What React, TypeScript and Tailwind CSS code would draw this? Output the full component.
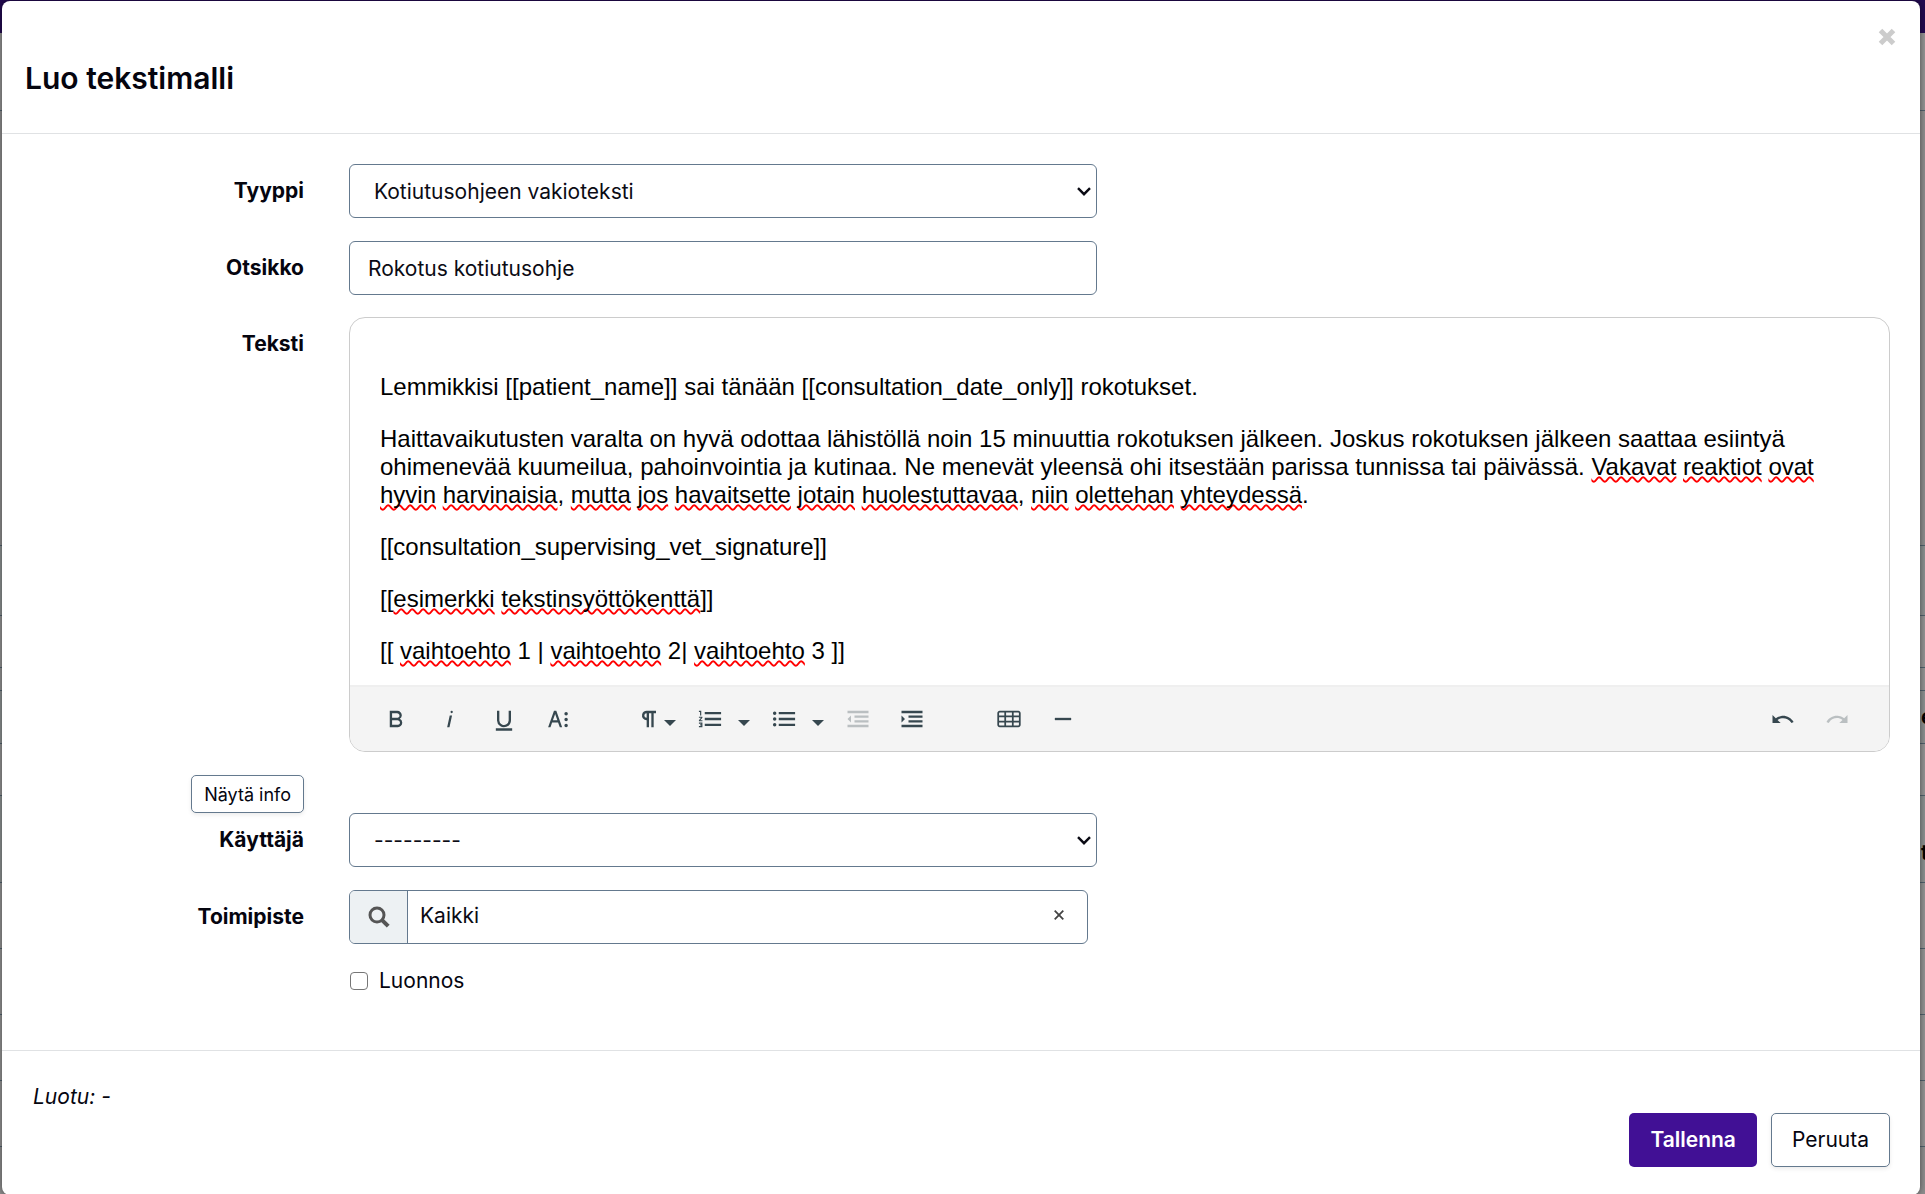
import { useState, type ReactNode } from "react";
import { clsx } from "clsx";

const CONTROL = "h-[54px] rounded-md border border-[#64798e] bg-white text-[21px] text-[#0b0b14] outline-none";

const ICONS = {
  bold: "M15.25,11.8h0A3.68,3.68,0,0,0,17,9a3.93,3.93,0,0,0-3.86-4H6.65V19h7a3.74,3.74,0,0,0,3.7-3.78V15.1A3.64,3.64,0,0,0,15.25,11.8ZM8.65,7h4.2a2.09,2.09,0,0,1,2,1.3,2.09,2.09,0,0,1-1.37,2.61,2.23,2.23,0,0,1-.63.09H8.65Zm4.6,10H8.65V13h4.6a2.09,2.09,0,0,1,2,1.3,2.09,2.09,0,0,1-1.37,2.61A2.23,2.23,0,0,1,13.25,17Z",
  italic: "M11.76,9h2l-2.2,10h-2Zm1.68-4a1,1,0,1,0,1,1,1,1,0,0,0-1-1Z",
  underline: "M19,20v2H5V20Zm-3-6.785a4,4,0,0,1-5.74,3.4A3.75,3.75,0,0,1,8,13.085V5.005H6v8.21a6,6,0,0,0,8,5.44,5.851,5.851,0,0,0,4-5.65v-8H16Z",
  moreText: "M13.55,19h2l-5-14h-2l-5,14h2l1.4-4h5.1Zm-5.9-6,1.9-5.2,1.9,5.2Zm12.8,4.5a1.5,1.5,0,1,1-1.5-1.5A1.5,1.5,0,0,1,20.45,17.5Zm0-5a1.5,1.5,0,1,1-1.5-1.5A1.5,1.5,0,0,1,20.45,12.5Zm0-5A1.5,1.5,0,1,1,18.95,6,1.5,1.5,0,0,1,20.45,7.5Z",
  paragraph: "M10.15,5A4.11,4.11,0,0,0,6.08,8.18,4,4,0,0,0,10,13v6h2V7h2V19h2V7h2V5ZM8,9a2,2,0,0,1,2-2v4A2,2,0,0,1,8,9Z",
  ordered: "M2.5,16h2v.5h-1v1h1V18h-2v1h3V15h-3Zm1-7h1V5h-2V6h1Zm-1,2H4.3L2.5,13.1V14h3V13H3.7l1.8-2.1V10h-3Zm5-5V8h14V6Zm0,12h14V16H7.5Zm0-5h14V11H7.5Z",
  unordered: "M4,10.5a1.5,1.5,0,1,0,0,3,1.5,1.5,0,0,0,0-3ZM4,5.5a1.5,1.5,0,1,0,0,3,1.5,1.5,0,0,0,0-3ZM4,15.5a1.5,1.5,0,1,0,0,3,1.5,1.5,0,0,0,0-3ZM7.5,6V8h14V6Zm0,12h14V16H7.5Zm0-5h14V11H7.5Z",
  outdent: "M3,12l3,3V9L3,12zM3,19h18v-2H3V19zM3,7h18V5H3V7zM9,11h12V9H9V11zM9,15h12v-2H9V15z",
  indent: "M3,9v6l3-3L3,9zM3,19h18v-2H3V19zM3,7h18V5H3V7zM9,11h12V9H9V11zM9,15h12v-2H9V15z",
  table: "M20,5H4C2.9,5,2,5.9,2,7v10c0,1.1,0.9,2,2,2h16c1.1,0,2-0.9,2-2V7C22,5.9,21.1,5,20,5zM9.5,13.5v-3h5v3H9.5zM14.5,15v2.5h-5V15H14.5zM9.5,9V6.5h5V9H9.5zM3.5,7c0-0.3,0.2-0.5,0.5-0.5h4V9H3.5V7zM3.5,10.5H8v3H3.5V10.5zM3.5,17v-2H8v2.5H4C3.7,17.5,3.5,17.3,3.5,17zM20.5,17c0,0.3-0.2,0.5-0.5,0.5h-4V15h4.5V17zM20.5,13.5H16v-3h4.5V13.5zM16,9V6.5h4c0.3,0,0.5,0.2,0.5,0.5v2H16z",
  line: "M5,11h14v2H5Z",
  undo: "M10.4,9.4c-1.7,0.3-3.2,0.9-4.6,2L3,8.5v7h7l-2.7-2.7c3.7-2.6,8.8-1.8,11.5,1.9c0.2,0.3,0.4,0.5,0.5,0.8l1.8-0.9C18.9,10.9,14.7,8.7,10.4,9.4z",
  redo: "M13.6,9.4c1.7,.3,3.2,.9,4.6,2L21,8.5v7h-7l2.7-2.7C13,10.1,7.9,11,5.3,14.7c-.2.3-.4.5-.5.8L3,14.6C5.1,10.8,9.3,8.7,13.6,9.4z",
};

function Tool({ icon, label, disabled }: { icon: keyof typeof ICONS; label: string; disabled?: boolean }) {
  return (
    <button
      type="button"
      aria-label={label}
      disabled={disabled}
      className={clsx("flex h-12 w-[54px] items-center justify-center text-[#36474f]", disabled && "opacity-30")}
    >
      <svg viewBox="0 0 24 24" className="size-7" fill="currentColor">
        <path d={ICONS[icon]} />
      </svg>
    </button>
  );
}

function Caret({ label }: { label: string }) {
  return (
    <button type="button" aria-label={label} className="flex h-12 w-5 items-center justify-center pt-2 text-[#36474f]">
      <svg viewBox="0 0 12 6" className="h-[6px] w-3" fill="currentColor">
        <path d="M0 0h12L6 6z" />
      </svg>
    </button>
  );
}

// Word flagged by the spell checker
function Sp({ children }: { children: ReactNode }) {
  return (
    <span className="underline decoration-[#ff0000] decoration-wavy decoration-2 underline-offset-1 [text-decoration-skip-ink:none]">
      {children}
    </span>
  );
}

function Select({ id, options }: { id: string; options: string[] }) {
  return (
    <div className="relative w-[748px] max-w-full">
      <select id={id} className={clsx(CONTROL, "w-full appearance-none pt-px pr-10 pl-6")}>
        {options.map((o) => (
          <option key={o}>{o}</option>
        ))}
      </select>
      <svg
        viewBox="0 0 14 9"
        className="pointer-events-none absolute right-[6px] top-[23px] h-[9px] w-[14px]"
        fill="none"
        stroke="#0b0b14"
        strokeWidth="2.4"
      >
        <path d="M1 1.2l6 6 6-6" />
      </svg>
    </div>
  );
}

function Label({ htmlFor, id, children }: { htmlFor?: string; id?: string; children: ReactNode }) {
  const cls = "block pt-[14px] text-right text-[21px] leading-[26px] font-bold";
  if (!htmlFor) {
    return (
      <span id={id} className={cls}>
        {children}
      </span>
    );
  }
  return (
    <label htmlFor={htmlFor} className={cls}>
      {children}
    </label>
  );
}

// Dimmed page that shows around the dialog
const ROWS = [
  { cls: "h-[78px] bg-[#939393]" },
  { cls: "h-[435px] bg-[#8d8d8d]" },
  { cls: "h-[70px] bg-[#8b9090]" },
  { cls: "h-[52px] bg-[#939393]" },
  { cls: "h-[23px] bg-[#939393]" },
  { cls: "h-[53px] bg-[#8b9090]", text: "e" },
  { cls: "h-[52px] bg-[#939393]" },
  { cls: "h-[87px] bg-[#8b9090] pt-7", text: "t" },
  { cls: "h-[66px] bg-[#939393]" },
  { cls: "h-[66px] bg-[#939393]" },
  { cls: "h-[66px] bg-[#939393]" },
  { cls: "h-[66px] bg-[#939393]" },
];

function PageBehind() {
  return (
    <div className="absolute inset-0 overflow-hidden bg-[#8d8d8d]" aria-hidden="true">
      <div className="h-[33px] bg-[#220a50]" />
      {ROWS.map((row, i) => (
        <div key={i} className={clsx("flex items-center justify-end border-b border-[#50606c]", row.cls)}>
          {row.text && <span className="w-1 text-[21px] font-bold text-black">{row.text}</span>}
        </div>
      ))}
    </div>
  );
}

function Editor() {
  return (
    <div className="overflow-hidden rounded-[16px] border border-[#cccccc]">
      <div
        role="textbox"
        aria-labelledby="text-label"
        aria-multiline="true"
        contentEditable
        suppressContentEditableWarning
        spellCheck={false}
        className="space-y-6 px-[30px] pt-[55px] pb-5 font-['Liberation_Sans',Arial,sans-serif] text-[24px] leading-7 text-black outline-none"
      >
        <p>Lemmikkisi [[patient_name]] sai tänään [[consultation_date_only]] rokotukset.</p>
        <p>
          Haittavaikutusten varalta on hyvä odottaa lähistöllä noin 15 minuuttia rokotuksen jälkeen. Joskus rokotuksen
          jälkeen saattaa esiintyä ohimenevää kuumeilua, pahoinvointia ja kutinaa. Ne menevät yleensä ohi itsestään
          parissa tunnissa tai päivässä. <Sp>Vakavat</Sp> <Sp>reaktiot</Sp> <Sp>ovat</Sp> <Sp>hyvin</Sp>{" "}
          <Sp>harvinaisia</Sp>, <Sp>mutta</Sp> <Sp>jos</Sp> <Sp>havaitsette</Sp> <Sp>jotain</Sp>{" "}
          <Sp>huolestuttavaa</Sp>, <Sp>niin</Sp> <Sp>olettehan</Sp> <Sp>yhteydessä</Sp>.
        </p>
        <p>[[consultation_supervising_vet_signature]]</p>
        <p>
          [[<Sp>esimerkki</Sp> <Sp>tekstinsyöttökenttä</Sp>]]
        </p>
        <p>
          [[ <Sp>vaihtoehto</Sp> 1 | <Sp>vaihtoehto</Sp> 2| <Sp>vaihtoehto</Sp> 3 ]]
        </p>
      </div>
      <div className="flex h-[66px] items-center border-t-2 border-[#efefef] bg-[#f4f4f4] pr-[17px] pb-px pl-[19px]">
        <div className="flex">
          <Tool icon="bold" label="Lihavointi" />
          <Tool icon="italic" label="Kursivointi" />
          <Tool icon="underline" label="Alleviivaus" />
          <Tool icon="moreText" label="Lisää tekstityylejä" />
        </div>
        <div className="ml-[37px] flex gap-[3px]">
          <div className="flex -space-x-4">
            <Tool icon="paragraph" label="Muotoilut" />
            <Caret label="Valitse muotoilu" />
          </div>
          <div className="flex -space-x-[3px]">
            <Tool icon="ordered" label="Numeroitu lista" />
            <Caret label="Numeroinnin tyyli" />
          </div>
          <div className="flex -space-x-[3px]">
            <Tool icon="unordered" label="Luettelo" />
            <Caret label="Luettelon tyyli" />
          </div>
          <div className="flex">
            <Tool icon="outdent" label="Pienennä sisennystä" disabled />
            <Tool icon="indent" label="Suurenna sisennystä" />
          </div>
        </div>
        <div className="ml-[43px] flex">
          <Tool icon="table" label="Lisää taulukko" />
          <Tool icon="line" label="Lisää vaakaviiva" />
        </div>
        <div className="ml-auto flex pr-2">
          <Tool icon="undo" label="Kumoa" />
          <Tool icon="redo" label="Tee uudelleen" disabled />
        </div>
      </div>
    </div>
  );
}

export default function App() {
  const [title, setTitle] = useState("Rokotus kotiutusohje");
  const [place, setPlace] = useState("Kaikki");
  const [draft, setDraft] = useState(false);

  return (
    <div className="relative min-h-screen pt-px pr-[5px] pl-[2px] font-[Inter,sans-serif] text-[#05050f]">
      <PageBehind />
      <form
        role="dialog"
        aria-labelledby="dialog-title"
        onSubmit={(e) => e.preventDefault()}
        className="relative rounded-lg bg-white shadow-[0_0_6px_rgba(0,0,0,0.5)]"
      >
        <header className="flex items-start justify-between border-b border-[#e0e2e4] pt-[23px] pr-5 pb-[35px] pl-[23px]">
          <h1 id="dialog-title" className="pt-[34px] text-[30px] leading-10 font-semibold">
            Luo tekstimalli
          </h1>
          <button type="button" aria-label="Sulje" className="flex size-[26px] justify-center pt-1 text-[#cccccc]">
            <svg viewBox="0 0 18 18" className="size-[18px]" stroke="currentColor" strokeWidth="5">
              <path d="M2.5 2.5l13 13M15.5 2.5l-13 13" />
            </svg>
          </button>
        </header>

        <div className="grid grid-cols-[302px_1fr] gap-x-[45px] pt-[30px] pr-[30px] pb-[55px]">
          <Label htmlFor="type">Tyyppi</Label>
          <Select id="type" options={["Kotiutusohjeen vakioteksti"]} />

          <div className="mt-[23px]">
            <Label htmlFor="title">Otsikko</Label>
          </div>
          <input
            id="title"
            value={title}
            onChange={(e) => setTitle(e.target.value)}
            className={clsx(CONTROL, "mt-[23px] w-[748px] max-w-full px-[18px]")}
          />

          <div className="mt-[22px]">
            <Label id="text-label">Teksti</Label>
          </div>
          <div className="mt-[22px]">
            <Editor />
          </div>

          <div className="mt-[23px] flex justify-end">
            <button
              type="button"
              className="h-[38px] rounded-[5px] border border-[#64798e] bg-white px-3 text-[18px] shadow-[0_2px_4px_rgba(0,0,0,0.08)]"
            >
              Näytä info
            </button>
          </div>
          <div />

          <Label htmlFor="user">Käyttäjä</Label>
          <Select id="user" options={["---------"]} />

          <div className="mt-[23px]">
            <Label htmlFor="place">Toimipiste</Label>
          </div>
          <div className={clsx(CONTROL, "mt-[23px] flex w-[739px] max-w-full items-stretch overflow-hidden")}>
            <div className="flex w-[58px] shrink-0 items-center justify-center border-r border-[#64798e] bg-[#edf1f3]">
              <svg viewBox="0 0 22 22" className="size-[22px]" fill="none" stroke="#555555">
                <circle cx="9" cy="9" r="7" strokeWidth="3" />
                <path d="M13.8 13.8l6.4 6.4" strokeWidth="4" />
              </svg>
            </div>
            <input
              id="place"
              value={place}
              onChange={(e) => setPlace(e.target.value)}
              className="min-w-0 flex-1 px-3 pb-0.5 outline-none"
            />
            <button
              type="button"
              aria-label="Tyhjennä"
              onClick={() => setPlace("")}
              className="flex w-14 items-center justify-center pb-1"
            >
              <svg viewBox="0 0 10 10" className="size-[10px]" stroke="#444444" strokeWidth="1.8">
                <path d="M.7 .7l8.6 8.6M9.3 .7l-8.6 8.6" />
              </svg>
            </button>
          </div>

          <div />
          <label className="mt-[23px] flex items-center gap-[11px] text-[21px] leading-7">
            <input
              type="checkbox"
              checked={draft}
              onChange={(e) => setDraft(e.target.checked)}
              className="ml-px size-[18px] appearance-none rounded-[4px] border border-[#767676] bg-white checked:bg-[#411095]"
            />
            Luonnos
          </label>
        </div>

        <footer className="border-t border-[#e0e2e4] pt-8 pr-[30px] pb-7 pl-[31px]">
          <p className="pb-0.5 text-[21px] leading-7 italic">Luotu: -</p>
          <div className="flex justify-end gap-[14px]">
            <button type="submit" className="h-[54px] rounded-[5px] bg-[#411095] px-[21px] text-[21px] font-semibold text-white">
              Tallenna
            </button>
            <button
              type="button"
              className="h-[54px] rounded-[5px] border border-[#64798e] bg-white px-5 text-[21px] shadow-[0_2px_4px_rgba(0,0,0,0.08)]"
            >
              Peruuta
            </button>
          </div>
        </footer>
      </form>
    </div>
  );
}
